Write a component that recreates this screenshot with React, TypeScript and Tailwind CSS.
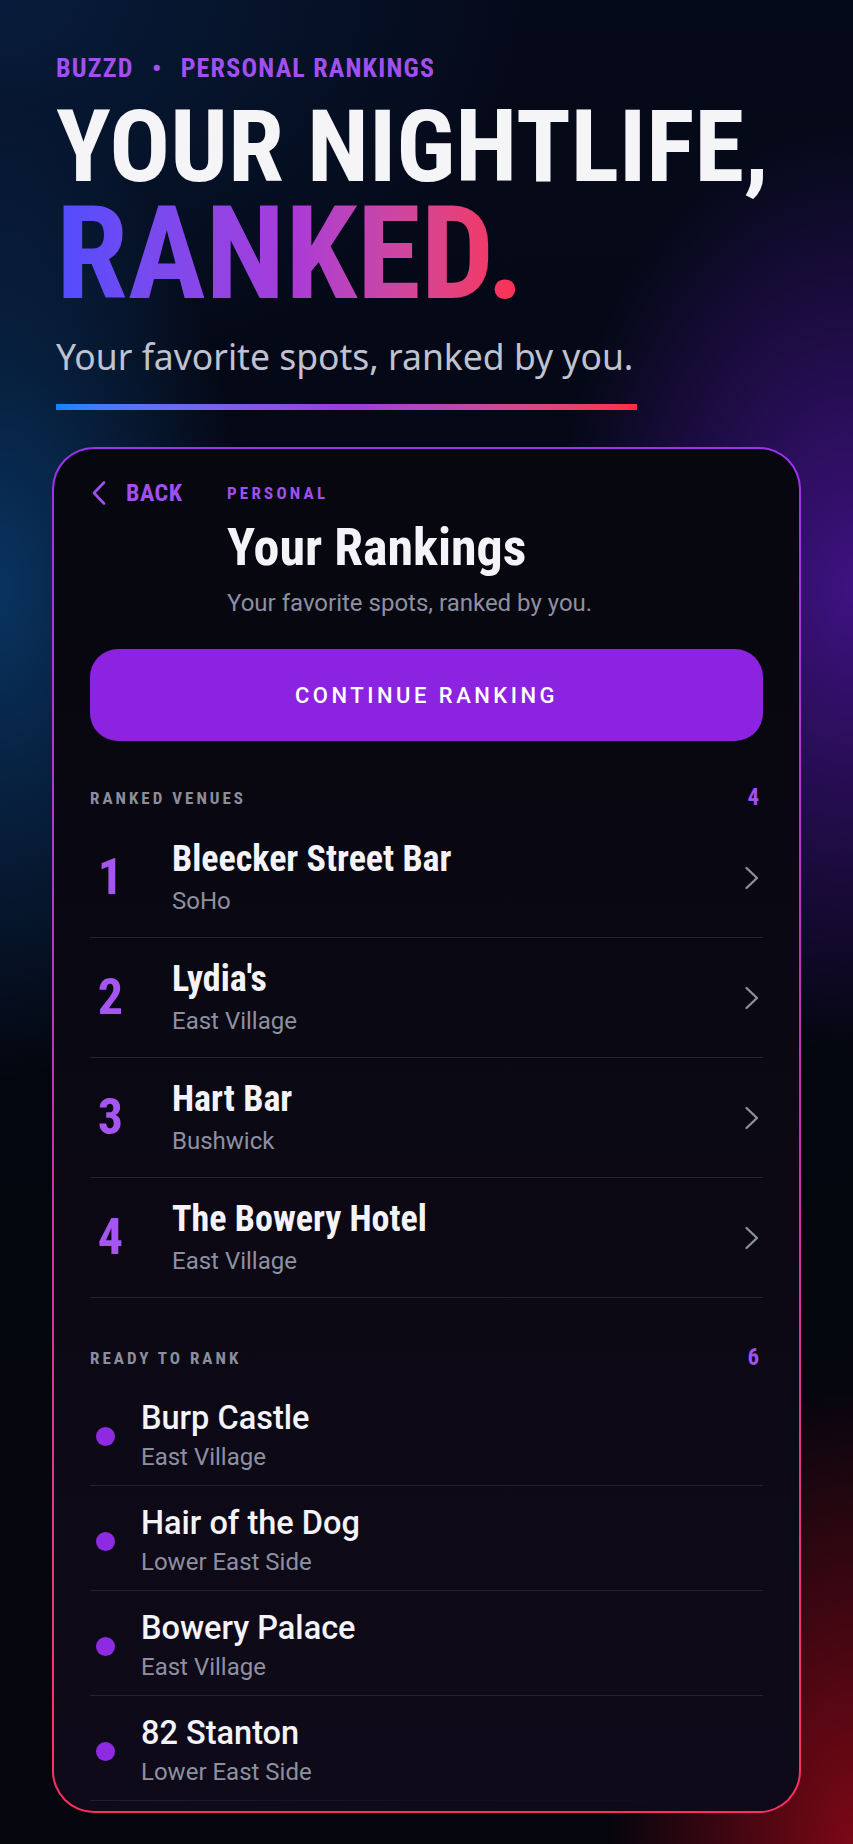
const cond = "font-['Liberation_Sans_Narrow','Roboto_Condensed','DejaVu_Sans_Condensed',sans-serif]";
const body = "font-['Roboto','Noto_Sans',sans-serif]";

const ranked = [
  { rank: 1, name: "Bleecker Street Bar", area: "SoHo" },
  { rank: 2, name: "Lydia's", area: "East Village" },
  { rank: 3, name: "Hart Bar", area: "Bushwick" },
  { rank: 4, name: "The Bowery Hotel", area: "East Village" },
];

// only the first four fit in the card
const unranked = [
  { name: "Burp Castle", area: "East Village" },
  { name: "Hair of the Dog", area: "Lower East Side" },
  { name: "Bowery Palace", area: "East Village" },
  { name: "82 Stanton", area: "Lower East Side" },
];

const SectionLabel = ({ label, count }: { label: string; count: number }) => (
  <div className="flex items-center justify-between">
    <span className={`${cond} text-[17px] leading-[20px] font-bold tracking-[3px] text-[#8a8e9d]`}>
      {label}
    </span>
    <span className={`${cond} text-[23px] leading-[20px] font-bold text-[#a24ff0] pr-[4px]`}>{count}</span>
  </div>
);

export default function App() {
  return (
    <div className="min-h-[1844px] w-full overflow-hidden bg-[radial-gradient(ellipse_340px_680px_at_0%_32%,rgba(10,62,115,0.8),transparent_72%),radial-gradient(ellipse_420px_640px_at_100%_32%,rgba(66,18,135,0.95),transparent_72%),radial-gradient(ellipse_340px_640px_at_100%_100%,rgba(130,8,22,0.95),transparent_72%),radial-gradient(ellipse_700px_500px_at_0%_0%,rgba(7,30,62,0.9),transparent_75%),linear-gradient(180deg,#050a1a_0%,#04060f_60%,#05050c_100%)]">
      {/* Hero */}
      <header className="px-[56px] pt-[50px]">
        <p className={`${cond} text-[26px] leading-[36px] font-bold tracking-[1.2px] text-[#a24ff0]`}>
          BUZZD <span className="mx-[11px]">•</span> PERSONAL RANKINGS
        </p>
        <h1 className={`${cond} mt-[15px] text-[101px] leading-[92px] font-bold text-[#f5f5f8]`}>
          YOUR NIGHTLIFE,
        </h1>
        <h2
          className={`${cond} mt-[6px] text-[130px] leading-[110px] font-bold bg-gradient-to-r from-[#4f4cff] via-[#a93ad8] to-[#ff2d48] bg-clip-text text-transparent w-fit pr-1`}
        >
          RANKED.
        </h2>
        <p className="mt-[25px] font-['Noto_Sans','Open_Sans',sans-serif] text-[35.5px] leading-[44px] text-[#bfc2d0]">
          Your favorite spots, ranked by you.
        </p>
        <div className="mt-[26px] h-[6px] w-[581px] bg-gradient-to-r from-[#0a84ff] via-[#9a3be0] to-[#ff2d40]" />
      </header>

      {/* Card */}
      <div className="mx-[52px] mt-[37px] rounded-[42px] p-[2px] bg-gradient-to-b from-[#9a32f0] via-[#cf2bb0] to-[#ff2e60]">
        <div className="relative h-[1362px] overflow-hidden rounded-[40px] bg-gradient-to-b from-[#07070f] to-[#0f0a19] px-[36px] pt-[34px]">
          <div className="flex">
            <button className="flex h-[20px] w-[137px] shrink-0 items-center text-[#a24ff0]">
              <svg width="16" height="26" viewBox="0 0 16 26" fill="none" className="ml-[1px]">
                <path d="M13 2.5 L3 13 L13 23.5" stroke="currentColor" strokeWidth="2.6" strokeLinecap="round" strokeLinejoin="round" />
              </svg>
              <span className={`${cond} ml-[19px] text-[24px] font-bold tracking-[0.5px]`}>BACK</span>
            </button>
            <div>
              <p className={`${cond} text-[17px] leading-[20px] font-bold tracking-[3.2px] text-[#a24ff0]`}>PERSONAL</p>
              <h3 className={`${cond} mt-[17px] text-[52px] leading-[56px] font-bold text-[#f4f4f8]`}>Your Rankings</h3>
              <p className={`${body} mt-[12px] text-[24px] leading-[30px] text-[#8d90a0]`}>
                Your favorite spots, ranked by you.
              </p>
            </div>
          </div>

          <button
            className={`${body} mt-[31px] flex h-[92px] w-full items-center justify-center rounded-[28px] bg-[#8c23e0] text-[22px] font-medium tracking-[3.5px] text-white`}
          >
            CONTINUE RANKING
          </button>

          <div className="mt-[47px]">
            <SectionLabel label="RANKED VENUES" count={4} />
          </div>

          <ul className="mt-[10px]">
            {ranked.map((v) => (
              <li key={v.rank} className="flex h-[120px] items-center border-b border-[#24222f]">
                <span className={`${cond} w-[41px] text-center text-[50px] font-bold text-[#a555f0]`}>{v.rank}</span>
                <div className="ml-[41px] flex-1">
                  <p className={`${cond} text-[36px] leading-[40px] font-bold text-[#f4f4f8]`}>{v.name}</p>
                  <p className={`${body} mt-[6px] text-[24px] leading-[32px] text-[#8d90a0]`}>{v.area}</p>
                </div>
                <svg width="16" height="24" viewBox="0 0 16 24" fill="none" className="mr-[3px]">
                  <path d="M2.5 2 L13 12 L2.5 22" stroke="#8a8e9d" strokeWidth="2.4" strokeLinecap="round" strokeLinejoin="round" />
                </svg>
              </li>
            ))}
          </ul>

          <div className="mt-[50px]">
            <SectionLabel label="READY TO RANK" count={6} />
          </div>

          <ul className="mt-[13px]">
            {unranked.map((v) => (
              <li key={v.name} className="flex h-[105px] items-center border-b border-[#24222f] pt-[6px]">
                <span className="ml-[6px] h-[19px] w-[19px] rounded-full bg-[#8e2be2]" />
                <div className="ml-[26px]">
                  <p className={`${body} text-[32.5px] leading-[36px] font-medium text-[#f4f4f8]`}>{v.name}</p>
                  <p className={`${body} mt-[6px] text-[24px] leading-[30px] text-[#8d90a0]`}>{v.area}</p>
                </div>
              </li>
            ))}
          </ul>

          {/* bottom fade over the list */}
          <div className="pointer-events-none absolute inset-x-0 bottom-0 h-[14px] bg-gradient-to-l from-[#0f0a19] via-[#0f0a19]/80 to-transparent" />
        </div>
      </div>
    </div>
  );
}
